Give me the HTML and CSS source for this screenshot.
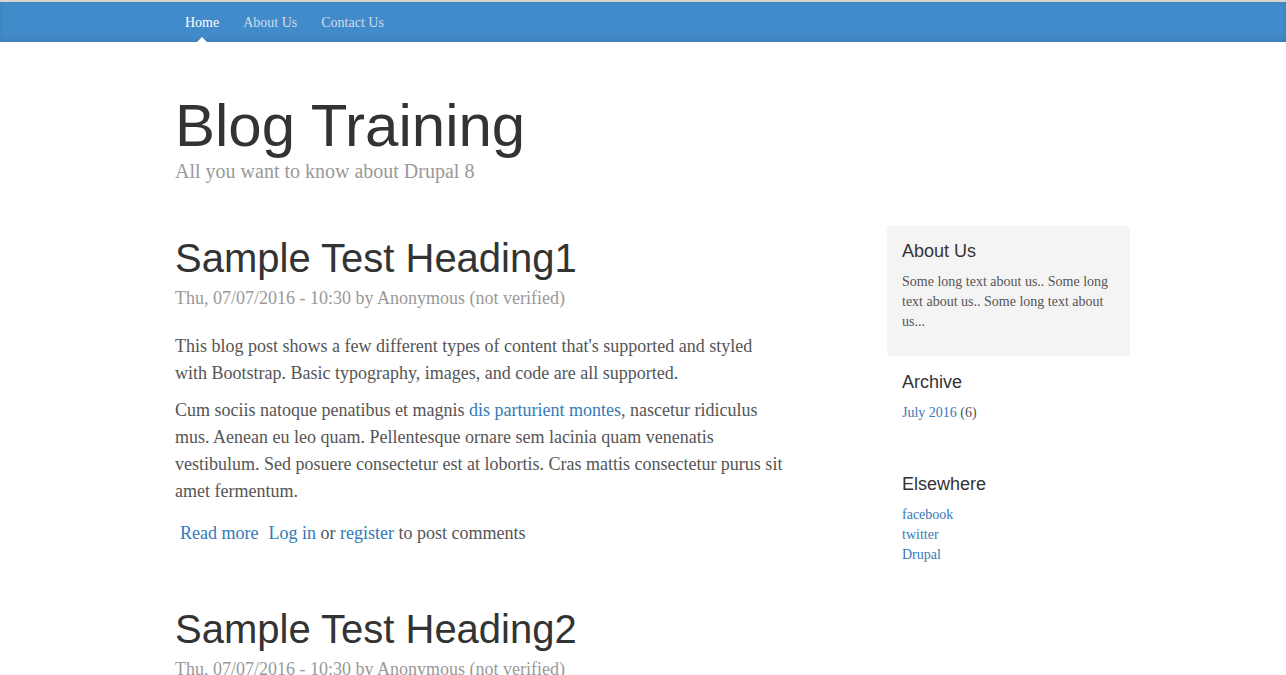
FILE: index.html
```html
<!DOCTYPE html>
<html>
<head>
<meta charset="utf-8">
<title>Blog Training</title>
<link rel="stylesheet" href="styles.css">
</head>
<body>
<div class="masthead">
  <div class="container">
    <nav class="blog-nav">
      <a class="nav-item active" href="#">Home</a>
      <a class="nav-item" href="#">About Us</a>
      <a class="nav-item" href="#">Contact Us</a>
    </nav>
  </div>
</div>

<div class="container">
  <header class="blog-header">
    <h1 class="blog-title">Blog Training</h1>
    <p class="blog-description">All you want to know about Drupal 8</p>
  </header>

  <div class="row">
    <main class="blog-main">
      <article class="blog-post">
        <h2 class="post-title">Sample Test Heading1</h2>
        <p class="post-meta">Thu, 07/07/2016 - 10:30 by Anonymous (not verified)</p>
        <p>This blog post shows a few different types of content that's supported and styled with Bootstrap. Basic typography, images, and code are all supported.</p>
        <p>Cum sociis natoque penatibus et magnis <a href="#">dis parturient montes</a>, nascetur ridiculus mus. Aenean eu leo quam. Pellentesque ornare sem lacinia quam venenatis vestibulum. Sed posuere consectetur est at lobortis. Cras mattis consectetur purus sit amet fermentum.</p>
        <ul class="links">
          <li><a href="#">Read more</a></li>
          <li><a href="#">Log in</a> or <a href="#">register</a> to post comments</li>
        </ul>
      </article>
      <article class="blog-post">
        <h2 class="post-title">Sample Test Heading2</h2>
        <p class="post-meta">Thu, 07/07/2016 - 10:30 by Anonymous (not verified)</p>
      </article>
    </main>

    <aside class="sidebar">
      <div class="module inset">
        <h4>About Us</h4>
        <p>Some long text about us.. Some long text about us.. Some long text about us...</p>
      </div>
      <div class="module archive">
        <h4>Archive</h4>
        <ol class="plain">
          <li><a href="#">July 2016</a> (6)</li>
        </ol>
      </div>
      <div class="module elsewhere">
        <h4>Elsewhere</h4>
        <ol class="plain">
          <li><a href="#">facebook</a></li>
          <li><a href="#">twitter</a></li>
          <li><a href="#">Drupal</a></li>
        </ol>
      </div>
    </aside>
  </div>
</div>
</body>
</html>
```

FILE: styles.css
```css
* { box-sizing: border-box; }
html, body { margin: 0; padding: 0; }
body {
  font-family: "Liberation Serif", "Times New Roman", serif;
  font-size: 14px;
  line-height: 1.428;
  color: #555;
  background: #fff;
  border-top: 2px solid #d8d4ce;
}
a { color: #337ab7; text-decoration: none; }

.container {
  width: 970px;
  margin: 0 auto;
  padding: 0 13px 0 17px;
}

.masthead {
  background: #428bca;
  box-shadow: inset 0 -2px 5px rgba(0,0,0,.1);
}
.blog-nav {
  display: flex;
  gap: 4px;
}
.nav-item {
  position: relative;
  display: block;
  padding: 11px 10px 9px;
  font-size: 14px;
  line-height: 20px;
  color: #cdddeb;
}
.nav-item.active { color: #fff; }
.nav-item.active::after {
  content: "";
  position: absolute;
  left: 50%;
  bottom: 0;
  margin-left: -5px;
  border: 5px solid transparent;
  border-bottom-color: #fff;
  border-top-width: 0;
}

.blog-header {
  padding-top: 51px;
  padding-bottom: 23px;
}
.blog-title {
  margin: 0;
  font-family: "Liberation Sans", Arial, sans-serif;
  font-size: 60px;
  font-weight: normal;
  line-height: 1.1;
  color: #333;
}
.blog-description {
  margin: 0;
  font-size: 20px;
  line-height: 24px;
  color: #999;
}

.row {
  display: flex;
  margin: 0 -15px;
}
.blog-main {
  width: 640px;
  padding: 0 15px;
  font-size: 18px;
}
.blog-post { margin-bottom: 60px; }
.post-title {
  margin: 30px 0 5px;
  font-family: "Liberation Sans", Arial, sans-serif;
  font-size: 40px;
  font-weight: normal;
  line-height: 1.1;
  color: #333;
}
.blog-post p.post-meta {
  margin: 0 0 21px;
  font-size: 18px;
  line-height: 27px;
  color: #999;
}
.blog-post p { margin: 0 0 10px; line-height: 27px; }
.links {
  list-style: none;
  margin: 0;
  padding: 5px 0 0 5px;
  display: flex;
  gap: 10px;
  line-height: 27px;
}

.sidebar {
  width: 243px;
  margin-left: 87px;
  margin-top: 20px;
  padding: 0 15px;
}
.module {
  margin: 0 -15px;
  padding: 15px;
}
.module.inset {
  background: #f4f4f4;
  border-radius: 4px;
  padding: 16px 15px 14px;
}
.module h4 {
  margin: 0 0 10px;
  font-family: "Liberation Sans", Arial, sans-serif;
  font-size: 18px;
  font-weight: normal;
  line-height: 1.1;
  color: #333;
}
.module p {
  margin: 0 0 10px;
  font-size: 14px;
  line-height: 20px;
}
.plain {
  list-style: none;
  margin: 0 0 10px;
  padding: 0;
  font-size: 14px;
  line-height: 20px;
}
.module.archive { padding-top: 17px; padding-bottom: 27px; }
.module.elsewhere h4 { margin-bottom: 11px; }
```
